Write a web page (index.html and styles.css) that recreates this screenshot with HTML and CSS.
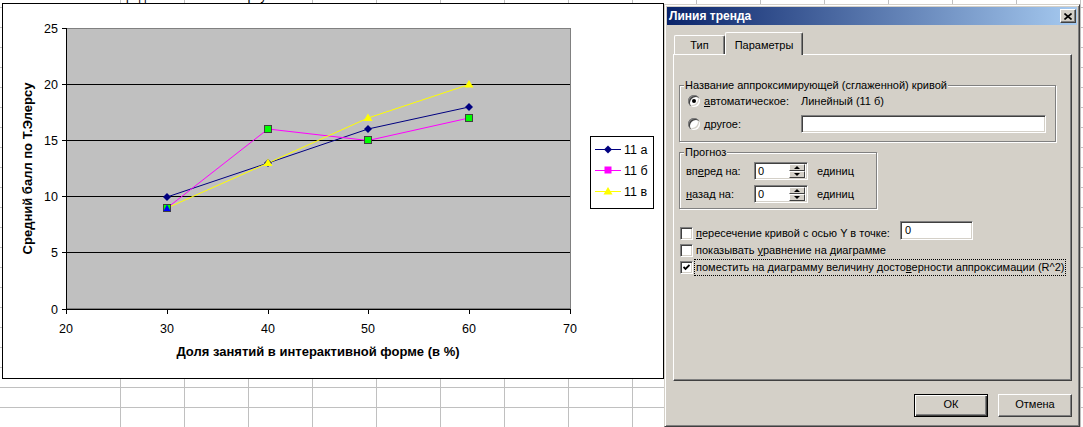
FILE: index.html
```html
<!DOCTYPE html>
<html lang="ru">
<head>
    <meta charset="UTF-8">
    <title>Линия тренда</title>
    <link rel="stylesheet" href="styles.css">
</head>
<body>
    <div class="sheet">
        <div class="cell-text">средний балл по Т.Элерсу</div>

        <div class="chart">
            <svg width="660" height="374" viewBox="3 4 660 374" font-family="Liberation Sans, Arial, sans-serif">
                <!-- plot area -->
                <rect x="66.5" y="28.5" width="504" height="280" fill="#c0c0c0" stroke="#808080"/>
                <path d="M66 84.5H570M66 140.5H570M66 196.5H570M66 252.5H570" stroke="#000"/>
                <path d="M66.5 28V310M66 309.5H571" stroke="#000"/>
                <path d="M62 28.5H66M62 84.5H66M62 140.5H66M62 196.5H66M62 252.5H66M62 309.5H66" stroke="#000"/>
                <path d="M66.5 309V314M167.5 309V314M268.5 309V314M368.5 309V314M469.5 309V314M570.5 309V314" stroke="#000"/>

                <g font-size="12.5" text-anchor="end" fill="#000">
                    <text x="58" y="33">25</text>
                    <text x="58" y="89">20</text>
                    <text x="58" y="145">15</text>
                    <text x="58" y="201">10</text>
                    <text x="58" y="257">5</text>
                    <text x="58" y="314">0</text>
                </g>
                <g font-size="12.5" text-anchor="middle" fill="#000">
                    <text x="66" y="333">20</text>
                    <text x="167" y="333">30</text>
                    <text x="268" y="333">40</text>
                    <text x="368" y="333">50</text>
                    <text x="469" y="333">60</text>
                    <text x="570" y="333">70</text>
                </g>
                <text x="318" y="356" font-size="13" font-weight="bold" text-anchor="middle">Доля занятий в интерактивной форме (в %)</text>
                <text transform="translate(32 168.5) rotate(-90)" font-size="13" font-weight="bold" text-anchor="middle">Средний балл по Т.Элерсу</text>

                <!-- series -->
                <polyline points="167,197 268,163 368,129 469,107" fill="none" stroke="#000080"/>
                <polyline points="167,208 268,129 368,140.5 469,118" fill="none" stroke="#ff00ff"/>
                <polyline points="167,208 268,163 368,118 469,84.5" fill="none" stroke="#ffff00"/>

                <g fill="#000080">
                    <polygon points="167,193 171,197 167,201 163,197"/>
                    <polygon points="268,159 272,163 268,167 264,163"/>
                    <polygon points="368,125 372,129 368,133 364,129"/>
                    <polygon points="469,103 473,107 469,111 465,107"/>
                </g>
                <g fill="#ffff00">
                    <polygon points="268,158.5 272.5,166 263.5,166"/>
                    <polygon points="368,113.5 372.5,121 363.5,121"/>
                    <polygon points="469,80 473.5,87.5 464.5,87.5"/>
                </g>
                <g fill="#00ff00" stroke="#404040">
                    <rect x="163.5" y="204.5" width="7" height="7"/>
                    <rect x="264.5" y="125.5" width="7" height="7"/>
                    <rect x="364.5" y="136.5" width="7" height="7"/>
                    <rect x="465.5" y="114.5" width="7" height="7"/>
                </g>
                <polygon points="167,204.5 170.5,211 163.5,211" fill="#0000ff"/>

                <!-- legend -->
                <rect x="590.5" y="136.5" width="63" height="72" fill="#fff" stroke="#000"/>
                <path d="M595 149.5H621" stroke="#000080"/>
                <polygon points="608,145.5 612,149.5 608,153.5 604,149.5" fill="#000080"/>
                <path d="M595 170.5H621" stroke="#ff00ff"/>
                <rect x="604.5" y="166.5" width="7" height="7" fill="#ff00ff"/>
                <path d="M595 191.5H621" stroke="#ffff00"/>
                <polygon points="608,187 612.5,194.5 603.5,194.5" fill="#ffff00"/>
                <g font-size="12.5" fill="#000">
                    <text x="624" y="154">11 а</text>
                    <text x="624" y="175">11 б</text>
                    <text x="624" y="196">11 в</text>
                </g>
            </svg>
        </div>

        <div class="dialog">
            <div class="titlebar">
                <span class="title">Линия тренда</span>
                <span class="close">
                    <svg width="8" height="7" viewBox="0 0 8 7"><path d="M0.5 0.5L7.5 6.5M7.5 0.5L0.5 6.5" stroke="#000" stroke-width="1.6"/></svg>
                </span>
            </div>
            <div class="dialog-body">
                <div class="tabs">
                    <div class="tab">Тип</div>
                    <div class="tab tab-active">Параметры</div>
                </div>
                <div class="panel">
                    <div class="group group-name">
                        <span class="group-title">Название аппроксимирующей (сглаженной) кривой</span>
                        <div class="name-row">
                            <span class="radio radio-on"></span>
                            <span class="name-label"><u>а</u>втоматическое:</span>
                            <span>Линейный (11 б)</span>
                        </div>
                        <div class="name-row">
                            <span class="radio"></span>
                            <span class="name-label"><u>д</u>ругое:</span>
                            <span class="field field-name"></span>
                        </div>
                    </div>

                    <div class="group group-forecast">
                        <span class="group-title">Прогноз</span>
                        <div class="fc-row">
                            <span class="fc-label">вп<u>е</u>ред на:</span>
                            <span class="field spin">
                                <span class="spin-value">0</span>
                                <span class="spin-btns"><span class="spin-btn"><i class="arrow-up"></i></span><span class="spin-btn"><i class="arrow-down"></i></span></span>
                            </span>
                            <span class="fc-unit">единиц</span>
                        </div>
                        <div class="fc-row">
                            <span class="fc-label"><u>н</u>азад на:</span>
                            <span class="field spin">
                                <span class="spin-value">0</span>
                                <span class="spin-btns"><span class="spin-btn"><i class="arrow-up"></i></span><span class="spin-btn"><i class="arrow-down"></i></span></span>
                            </span>
                            <span class="fc-unit">единиц</span>
                        </div>
                    </div>

                    <div class="checks">
                        <div class="check-row">
                            <span class="check"></span>
                            <span class="check-label check-label-cross"><u>п</u>ересечение кривой с осью Y в точке:</span>
                            <span class="field field-cross">0</span>
                        </div>
                        <div class="check-row">
                            <span class="check"></span>
                            <span class="check-label">показывать <u>у</u>равнение на диаграмме</span>
                        </div>
                        <div class="check-row">
                            <span class="check">
                                <svg width="7" height="7" viewBox="0 0 7 7"><path d="M0.5 3L2.5 5L6.5 1" fill="none" stroke="#000" stroke-width="1.8"/></svg>
                            </span>
                            <span class="check-label focused">поместить на диаграмму величину досто<u>в</u>ерности аппроксимации (R^2)</span>
                        </div>
                    </div>
                </div>
                <div class="buttons">
                    <span class="btn btn-default"><span class="btn-face">ОК</span></span>
                    <span class="btn"><span class="btn-face">Отмена</span></span>
                </div>
            </div>
        </div>
    </div>
</body>
</html>
```

FILE: styles.css
```css
body {
    margin: 0;
    font-family: "Liberation Sans", Arial, sans-serif;
    font-size: 11px;
    color: #000;
}
.sheet {
    position: relative;
    width: 1083px;
    height: 427px;
    overflow: hidden;
    background-color: #fff;
    background-image:
        repeating-linear-gradient(to right, #c0c0c0 0 1px, transparent 1px 64px),
        linear-gradient(to bottom, #c0c0c0 1px, transparent 1px);
    background-size: 963px 100%, 64px 20px;
    background-position: 120px 0, 0 7px;
    background-repeat: no-repeat, repeat;
}
.cell-text {
    position: absolute;
    left: 120px;
    top: -11px;
    font-size: 12px;
}

/* chart object */
.chart {
    position: absolute;
    left: 2px;
    top: 3px;
    width: 662px;
    height: 376px;
    box-sizing: border-box;
    border: 1px solid #000;
    background: #fff;
}
.chart svg {
    display: block;
}

/* dialog window */
.dialog {
    position: absolute;
    left: 664px;
    top: 4px;
    width: 416px;
    height: 423px;
    box-sizing: border-box;
    padding: 2px;
    background: #d4d0c8;
    border: 1px solid;
    border-color: #d4d0c8 #404040 #404040 #d4d0c8;
    box-shadow: inset 1px 1px 0 #fff, inset -1px -1px 0 #808080;
}
.titlebar {
    display: flex;
    align-items: center;
    justify-content: space-between;
    height: 18px;
    padding: 0 1px 0 2px;
    background: linear-gradient(to right, #0a246a, #a6caf0);
    color: #fff;
    font-weight: bold;
    font-size: 12px;
}
.close {
    display: flex;
    align-items: center;
    justify-content: center;
    width: 16px;
    height: 14px;
    box-sizing: border-box;
    background: #d4d0c8;
    border: 1px solid;
    border-color: #fff #404040 #404040 #fff;
    box-shadow: inset -1px -1px 0 #808080;
}
.close svg {
    display: block;
}
.dialog-body {
    padding: 0 5px 0 6px;
}

/* tabs */
.tabs {
    display: flex;
    align-items: flex-end;
    height: 22px;
    margin-top: 7px;
}
.tab {
    height: 19px;
    box-sizing: border-box;
    padding-top: 3px;
    line-height: 13px;
    text-align: center;
    border: 1px solid;
    border-bottom: 0;
    border-color: #fff #404040 #fff #fff;
    border-radius: 2px 2px 0 0;
    box-shadow: inset -1px 0 0 #808080;
    width: 51px;
    margin-left: 1px;
}
.tab-active {
    position: relative;
    z-index: 1;
    height: 23px;
    margin-bottom: -1px;
    margin-left: 0;
    padding-top: 6px;
    width: 78px;
    background: #d4d0c8;
}

.panel {
    width: 399px;
    height: 327px;
    box-sizing: border-box;
    border: 1px solid;
    border-color: #fff #404040 #404040 #fff;
    box-shadow: inset -1px -1px 0 #808080;
    padding: 30px 0 0 5px;
}

/* group boxes */
.group {
    position: relative;
    box-sizing: border-box;
    border: 1px solid #808080;
    box-shadow: inset 1px 1px 0 #fff, 1px 1px 0 #fff;
}
.group-title {
    position: absolute;
    top: -7px;
    left: 4px;
    padding: 0 1px;
    line-height: 13px;
    background: #d4d0c8;
}
.group-name {
    width: 377px;
    padding: 6px 8px 8px 8px;
}
.name-row {
    display: flex;
    align-items: center;
    height: 18px;
}
.name-row + .name-row {
    margin-top: 5px;
}
.name-label {
    width: 97px;
}
.radio {
    position: relative;
    flex: none;
    width: 12px;
    height: 12px;
    margin-right: 4px;
    border-radius: 50%;
    background: #fff;
    box-shadow: inset 1px 1px 0 #808080, inset 2px 2px 0 #404040, inset -1px -1px 0 #fff, inset -2px -2px 0 #d4d0c8;
}
.radio-on::after {
    content: "";
    position: absolute;
    left: 4px;
    top: 4px;
    width: 4px;
    height: 4px;
    border-radius: 50%;
    background: #000;
}

.field {
    box-sizing: border-box;
    background: #fff;
    border: 1px solid;
    border-color: #808080 #fff #fff #808080;
    box-shadow: inset 1px 1px 0 #404040, inset -1px -1px 0 #d4d0c8;
}
.field-name {
    width: 245px;
    height: 18px;
}

.group-forecast {
    width: 198px;
    margin-top: 10px;
    padding: 9px 6px 5px 6px;
}
.fc-row {
    display: flex;
    align-items: center;
    height: 18px;
}
.fc-row + .fc-row {
    margin-top: 5px;
}
.fc-label {
    width: 68px;
}
.spin {
    display: flex;
    align-items: center;
    justify-content: space-between;
    width: 54px;
    height: 18px;
    padding: 2px 2px 2px 3px;
}
.spin-btns {
    display: flex;
    flex-direction: column;
    width: 16px;
    height: 14px;
}
.spin-btn {
    display: flex;
    align-items: center;
    justify-content: center;
    flex: 1;
    box-sizing: border-box;
    background: #d4d0c8;
    border: 1px solid;
    border-color: #fff #404040 #404040 #fff;
}
.arrow-up,
.arrow-down {
    width: 0;
    height: 0;
    border-left: 3px solid transparent;
    border-right: 3px solid transparent;
}
.arrow-up {
    border-bottom: 3px solid #000;
}
.arrow-down {
    border-top: 3px solid #000;
}
.fc-unit {
    margin-left: 9px;
}

/* check boxes */
.checks {
    margin: 16px 0 0 1px;
}
.check-row {
    display: flex;
    align-items: center;
    height: 17px;
}
.check {
    display: flex;
    align-items: center;
    justify-content: center;
    flex: none;
    width: 13px;
    height: 13px;
    box-sizing: border-box;
    background: #fff;
    border: 1px solid;
    border-color: #808080 #fff #fff #808080;
    box-shadow: inset 1px 1px 0 #404040, inset -1px -1px 0 #d4d0c8;
}
.check svg {
    display: block;
}
.check-label {
    margin-left: 1px;
    padding: 0 1px;
    line-height: 15px;
    border: 1px solid transparent;
}
.check-label-cross {
    flex: 0 0 206px;
    box-sizing: border-box;
}
.focused {
    border: 1px dotted #000;
}
.field-cross {
    align-self: flex-end;
    width: 73px;
    height: 19px;
    margin-bottom: 2px;
    padding: 2px 0 0 4px;
    line-height: 13px;
}

/* buttons */
.buttons {
    display: flex;
    justify-content: flex-end;
    gap: 10px;
    width: 399px;
    margin-top: 13px;
}
.btn {
    display: block;
    width: 74px;
    height: 23px;
    box-sizing: border-box;
    border: 1px solid;
    border-color: #fff #404040 #404040 #fff;
    box-shadow: inset -1px -1px 0 #808080;
    text-align: center;
}
.btn-face {
    display: block;
    line-height: 19px;
}
.btn-default {
    border: 1px solid #000;
    box-shadow: inset 1px 1px 0 #fff, inset -1px -1px 0 #404040, inset -2px -2px 0 #808080;
}
```
